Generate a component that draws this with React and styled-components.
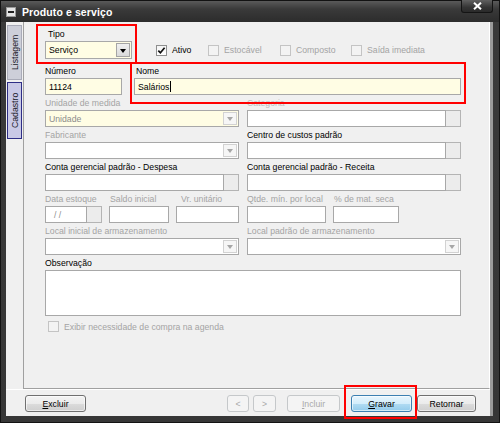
import React from 'react';
import styled, { createGlobalStyle } from 'styled-components';

const GlobalStyle = createGlobalStyle`
  html, body { margin: 0; padding: 0; background: #ffffff; }
  body { font-family: "Liberation Sans", Arial, sans-serif; }
  * { box-sizing: border-box; }
`;

const FONT = '8.7px';
const YELLOW = '#fffde4';
const DIS = '#a4a4a4';

const Window = styled.div`
  position: relative;
  width: 500px;
  height: 423px;
  display: flex;
  flex-direction: column;
  border: 1px solid #121212;
  padding: 0 6px 6px 5px;
  background: linear-gradient(#5a5a5a 0px, #3a3a3a 8px, #2c2c2c 21px, #3a3a3a 21px, #363636 100%);
`;

const TitleBar = styled.div`
  height: 21px;
  flex: none;
  display: flex;
  align-items: center;
`;

const SysIcon = styled.div`
  width: 10px;
  height: 10px;
  border: 1px solid #9a9a9a;
  background: #e6e6e6;
  display: flex;
  align-items: center;
  justify-content: center;
  &::after {
    content: '';
    width: 6px;
    height: 2px;
    background: #222;
  }
`;

const Title = styled.div`
  margin-left: 6px;
  color: #ffffff;
  font-weight: bold;
  font-size: 10.5px;
  letter-spacing: 0.1px;
`;

const CloseBtn = styled.div`
  margin-left: auto;
  align-self: flex-start;
  margin-top: -1px;
  width: 32px;
  height: 13px;
  border: 1px solid #141414;
  border-top: none;
  border-radius: 0 0 3px 3px;
  background: linear-gradient(#606060, #353535 60%, #2a2a2a);
  display: flex;
  align-items: center;
  justify-content: center;
`;

const Client = styled.div`
  flex: 1;
  display: flex;
  flex-direction: column;
  background: #f0f0f0;
  border-right: 3px solid #9b9b9b;
`;

const Main = styled.div`
  flex: 1;
  display: flex;
`;

const TabStrip = styled.div`
  width: 17px;
  padding: 3px 0 0 1px;
  display: flex;
  flex-direction: column;
  gap: 2px;
`;

const Tab = styled.div`
  width: 15px;
  height: ${p => p.$h}px;
  writing-mode: vertical-rl;
  transform: rotate(180deg);
  display: flex;
  align-items: center;
  justify-content: center;
  font-size: ${FONT};
  color: #1a1a2a;
  border: 1px solid ${p => (p.$active ? '#2e2e86' : '#a9abb8')};
  background: ${p => (p.$active ? '#c9c9e6' : '#cdcfd9')};
`;

const Panel = styled.div`
  flex: 1;
  border-left: 1px solid #a0a0a0;
  border-right: 1px solid #ffffff;
  border-bottom: 1px solid #a0a0a0;
  padding: 6px 0 0 21px;
  display: flex;
  flex-direction: column;
`;

const Row = styled.div`
  display: flex;
  flex: none;
  gap: ${p => p.$gap ?? 8}px;
  margin-bottom: ${p => p.$mb ?? 2}px;
  align-items: ${p => p.$align ?? 'flex-start'};
`;

const Field = styled.div`
  width: ${p => p.$w}px;
  margin-left: ${p => p.$ml ?? 0}px;
  flex: none;
  display: flex;
  flex-direction: column;
`;

const Label = styled.div`
  height: 13px;
  line-height: 13px;
  font-size: ${FONT};
  white-space: nowrap;
  color: ${p => (p.$disabled ? DIS : p.$faint ? '#bdbdbd' : '#000')};
  padding-left: ${p => p.$pl ?? 0}px;
`;

const Box = styled.div`
  position: relative;
  height: ${p => p.$h ?? 17}px;
  width: 100%;
  flex: none;
  border: 1px solid #a8a8a8;
  background: ${p => p.$bg ?? '#fff'};
  font-size: ${FONT};
  color: ${p => (p.$disabled ? '#8c8c8c' : '#000')};
  display: flex;
  align-items: center;
  padding-left: ${p => p.$pl ?? 3}px;
`;

const LookupBox = styled(Box)`
  flex: 1;
  width: auto;
  min-width: 0;
`;

const Caret = styled.span`
  width: 1px;
  height: 11px;
  background: #000;
  margin-left: 1px;
`;

const ArrowBtn = styled.div`
  margin-left: auto;
  width: 14px;
  height: calc(100% - 2px);
  margin-right: 1px;
  border: 1px solid ${p => (p.$disabled ? '#d2d2d2' : '#a5a5a5')};
  background: ${p => (p.$disabled ? '#f6f6f6' : 'linear-gradient(#f0f0f0, #dadada)')};
  display: flex;
  align-items: center;
  justify-content: center;
  &::after {
    content: '';
    border-left: 3.5px solid transparent;
    border-right: 3.5px solid transparent;
    border-top: 4px solid ${p => (p.$disabled ? '#a6a6a6' : '#000')};
    margin-top: 1px;
  }
`;

const Lookup = styled.div`
  display: flex;
  height: 17px;
`;

const SideBtn = styled.div`
  width: 16px;
  flex: none;
  height: 17px;
  margin-left: -1px;
  border: 1px solid #b4b4b4;
  background: #ececec;
`;

const Checks = styled.div`
  display: flex;
  align-items: center;
  height: 18px;
  margin-left: 24px;
`;

const CheckItem = styled.label`
  display: flex;
  align-items: center;
  width: ${p => (p.$w ? `${p.$w}px` : 'auto')};
  margin-left: ${p => p.$ml ?? 0}px;
  margin-top: ${p => p.$mt ?? 0}px;
  font-size: ${FONT};
  color: ${p => (p.$disabled ? DIS : '#000')};
  white-space: nowrap;
`;

const CheckBox = styled.span`
  width: 11px;
  height: 11px;
  margin-right: 5px;
  border: 1px solid ${p => (p.$disabled ? '#c4c4c4' : '#8e8f8f')};
  background: ${p => (p.$disabled ? '#f3f3f3' : 'linear-gradient(#f4f4f4, #ffffff)')};
  display: flex;
  align-items: center;
  justify-content: center;
`;

const BottomBar = styled.div`
  height: 27px;
  flex: none;
  border-top: 1px solid #ffffff;
  display: flex;
  align-items: flex-start;
  padding: 5px 14px 0 19px;
`;

const Btn = styled.div`
  width: ${p => p.$w}px;
  height: 17px;
  margin-left: ${p => p.$ml ?? 0}px;
  border-radius: 3px;
  font-size: ${FONT};
  display: flex;
  align-items: center;
  justify-content: center;
  border: 1px solid ${p => (p.$variant === 'primary' ? '#3c7fb1' : p.$variant === 'disabled' ? '#c5c8ca' : '#707070')};
  color: ${p => (p.$variant === 'disabled' ? '#a9a9a9' : '#000')};
  background: ${p =>
    p.$variant === 'primary'
      ? 'linear-gradient(#e8f5fd 0%, #d3edfb 50%, #b2dcf3 50%, #93cbeb 100%)'
      : p.$variant === 'disabled'
      ? '#f4f4f4'
      : 'linear-gradient(#f4f4f4 0%, #ebebeb 50%, #dcdcdc 50%, #cfcfcf 100%)'};
  box-shadow: inset 0 0 0 1px ${p => (p.$variant === 'disabled' ? 'transparent' : 'rgba(255,255,255,0.6)')};
  u { text-decoration: underline; }
`;

const Spacer = styled.div`
  flex: 1;
`;

const Highlight = styled.div`
  position: absolute;
  left: ${p => p.$x}px;
  top: ${p => p.$y}px;
  width: ${p => p.$w}px;
  height: ${p => p.$h}px;
  border: 2px solid #ff0000;
  pointer-events: none;
`;

const Check = () => (
  <svg width="9" height="9" viewBox="0 0 9 9">
    <path d="M1.3 4.6 L3.4 6.8 L7.6 1.8" fill="none" stroke="#111" strokeWidth="1.7" />
  </svg>
);

const CloseX = () => (
  <svg width="9" height="8" viewBox="0 0 9 8">
    <path d="M1 0.8 L8 7.2 M8 0.8 L1 7.2" stroke="#ffffff" strokeWidth="2" />
  </svg>
);

const Combo = ({ bg, disabled, text, h }) => (
  <Box $bg={bg} $disabled={disabled} $h={h}>
    {text}
    <ArrowBtn $disabled={disabled} />
  </Box>
);

const LookupField = ({ w, label, disabled, faint, bg }) => (
  <Field $w={w}>
    <Label $disabled={disabled} $faint={faint}>{label}</Label>
    <Lookup>
      <LookupBox $bg={bg} />
      <SideBtn />
    </Lookup>
  </Field>
);

export default function App() {
  return (
    <>
      <GlobalStyle />
      <Window>
        <TitleBar>
          <SysIcon />
          <Title>Produto e serviço</Title>
          <CloseBtn>
            <CloseX />
          </CloseBtn>
        </TitleBar>
        <Client>
          <Main>
            <TabStrip>
              <Tab $h={55}>Listagem</Tab>
              <Tab $h={57} $active>Cadastro</Tab>
            </TabStrip>
            <Panel>
              <Row $mb={6} $align="flex-end" $gap={0}>
                <Field $w={87}>
                  <Label $pl={3}>Tipo</Label>
                  <Combo bg={YELLOW} text="Serviço" h={18} />
                </Field>
                <Checks>
                  <CheckItem $w={52}>
                    <CheckBox><Check /></CheckBox>Ativo
                  </CheckItem>
                  <CheckItem $w={72} $disabled>
                    <CheckBox $disabled />Estocável
                  </CheckItem>
                  <CheckItem $w={71} $disabled>
                    <CheckBox $disabled />Composto
                  </CheckItem>
                  <CheckItem $disabled>
                    <CheckBox $disabled />Saída imediata
                  </CheckItem>
                </Checks>
              </Row>

              <Row $gap={12}>
                <Field $w={77}>
                  <Label>Número</Label>
                  <Box $bg={YELLOW}>11124</Box>
                </Field>
                <Field $w={327}>
                  <Label $pl={2}>Nome</Label>
                  <Box $bg={YELLOW}>Salários<Caret /></Box>
                </Field>
              </Row>

              <Row>
                <Field $w={194}>
                  <Label $disabled>Unidade de medida</Label>
                  <Combo bg={YELLOW} disabled text="Unidade" />
                </Field>
                <LookupField w={214} label="Categoria" faint />
              </Row>

              <Row>
                <Field $w={194}>
                  <Label $disabled>Fabricante</Label>
                  <Combo disabled />
                </Field>
                <LookupField w={214} label="Centro de custos padrão" />
              </Row>

              <Row>
                <LookupField w={194} label="Conta gerencial padrão - Despesa" />
                <LookupField w={214} label="Conta gerencial padrão - Receita" />
              </Row>

              <Row $gap={7}>
                <Field $w={57}>
                  <Label $disabled>Data estoque</Label>
                  <Lookup>
                    <LookupBox $pl={8} $disabled>/ /</LookupBox>
                    <SideBtn />
                  </Lookup>
                </Field>
                <Field $w={60}>
                  <Label $disabled $pl={1}>Saldo inicial</Label>
                  <Box />
                </Field>
                <Field $w={63}>
                  <Label $disabled $pl={5}>Vr. unitário</Label>
                  <Box />
                </Field>
                <Field $w={79} $ml={1}>
                  <Label $disabled>Qtde. mín. por local</Label>
                  <Box />
                </Field>
                <Field $w={66}>
                  <Label $disabled $pl={1}>% de mat. seca</Label>
                  <Box />
                </Field>
              </Row>

              <Row>
                <Field $w={194}>
                  <Label $disabled>Local inicial de armazenamento</Label>
                  <Combo disabled />
                </Field>
                <Field $w={214}>
                  <Label $disabled>Local padrão de armazenamento</Label>
                  <Combo disabled />
                </Field>
              </Row>

              <Row $mb={5}>
                <Field $w={416}>
                  <Label>Observação</Label>
                  <Box $h={46} />
                </Field>
              </Row>

              <Row>
                <CheckItem $disabled $ml={3}>
                  <CheckBox $disabled />Exibir necessidade de compra na agenda
                </CheckItem>
              </Row>
            </Panel>
          </Main>
          <BottomBar>
            <Btn $w={61}><span><u>E</u>xcluir</span></Btn>
            <Spacer />
            <Btn $w={22} $variant="disabled">&lt;</Btn>
            <Btn $w={23} $ml={4} $variant="disabled">&gt;</Btn>
            <Btn $w={53} $ml={11} $variant="disabled"><span><u>I</u>ncluir</span></Btn>
            <Btn $w={61} $ml={11} $variant="primary"><span><u>G</u>ravar</span></Btn>
            <Btn $w={59} $ml={5}>Retornar</Btn>
          </BottomBar>
        </Client>
        <Highlight $x={35} $y={23} $w={101} $h={40} />
        <Highlight $x={129} $y={61} $w={336} $h={42} />
        <Highlight $x={343} $y={384} $w={73} $h={34} />
      </Window>
    </>
  );
}
